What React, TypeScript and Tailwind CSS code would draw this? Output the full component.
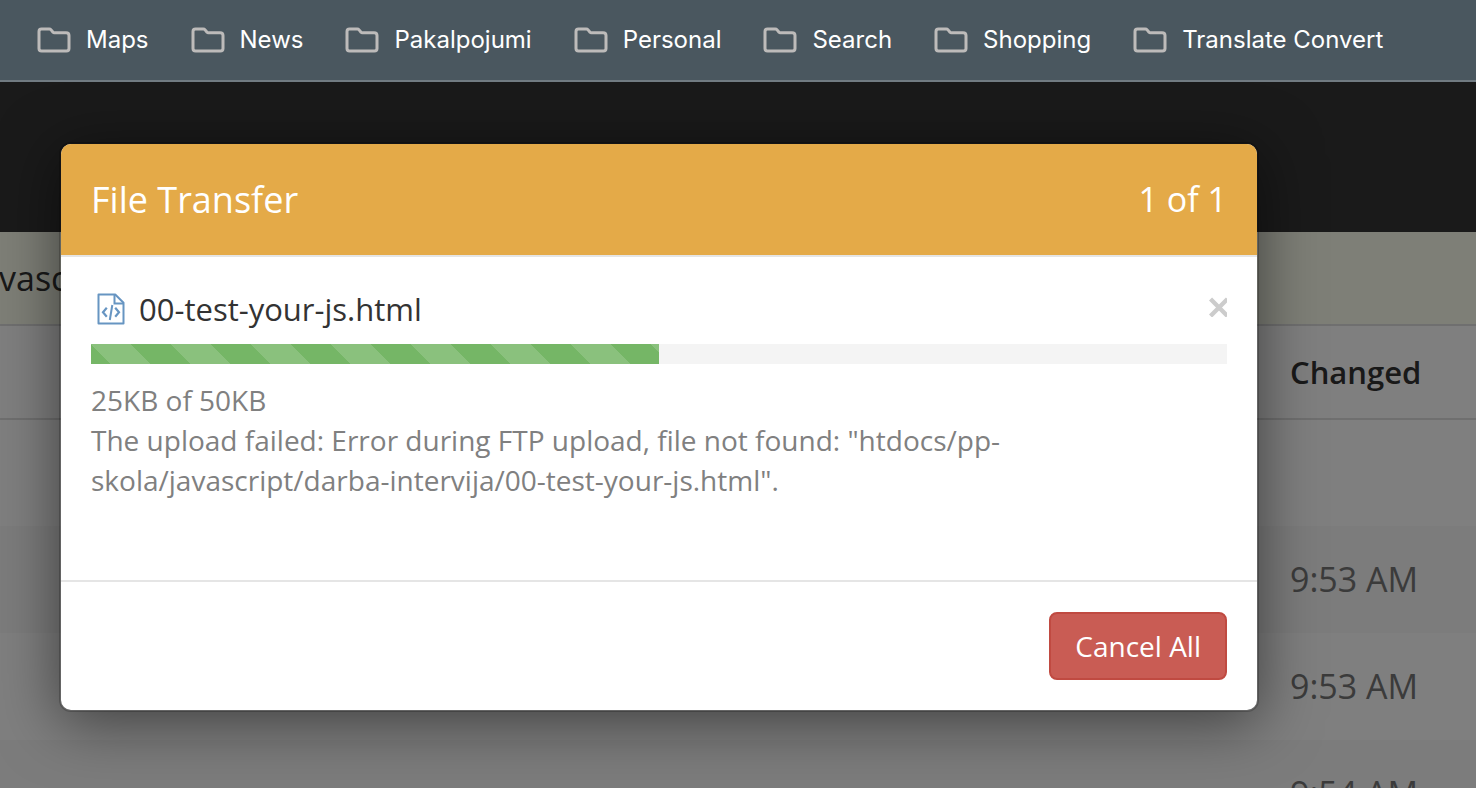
const bookmarks = ["Maps", "News", "Pakalpojumi", "Personal", "Search", "Shopping", "Translate Convert"];

const rows = ["", "9:53 AM", "9:53 AM", "9:54 AM"];

const transfer = {
  name: "00-test-your-js.html",
  done: 25,
  total: 50,
  error:
    'The upload failed: Error during FTP upload, file not found: "htdocs/pp-skola/javascript/darba-intervija/00-test-your-js.html".',
};

function FolderIcon() {
  return (
    <svg className="w-[34px] h-[26px] shrink-0" viewBox="0 0 34 26" fill="none" stroke="#bdbbba" strokeWidth="3" strokeLinejoin="round">
      <path d="M2 4.5C2 2.8 2.8 2 4.5 2H12.2C13 2 13.6 2.3 14.1 2.9L16 5.2C16.3 5.6 16.8 5.8 17.4 5.8H29C31 5.8 32 6.8 32 8.6V21.4C32 23.2 31.2 24 29.4 24H4.6C2.8 24 2 23.2 2 21.4Z" />
    </svg>
  );
}

function CodeFileIcon() {
  return (
    <svg className="w-[28px] h-[32px] shrink-0" viewBox="0 0 28 32" fill="none" stroke="#6795c2" strokeWidth="2">
      <path d="M1.5 1.5H18.2L26.5 9.8V30.5H1.5Z" strokeLinejoin="round" />
      <path d="M17.5 1.5V10.5H26.5" />
      <path d="M9.8 14.8L6 19.3L9.8 23.8M18.2 14.8L22 19.3L18.2 23.8" strokeWidth="2.2" />
      <path d="M15.3 12L12.8 27" />
    </svg>
  );
}

function BookmarksBar() {
  return (
    <nav className="flex items-center gap-[42px] h-[82px] shrink-0 px-[37px] bg-[#4a575f] border-b-2 border-[#717b82] overflow-hidden">
      {bookmarks.map((label) => (
        <a key={label} href="#" className="flex items-center gap-[15px] text-2xl text-white font-['Inter',sans-serif] whitespace-nowrap">
          <FolderIcon />
          {label}
        </a>
      ))}
    </nav>
  );
}

function FileList() {
  return (
    <div className="bg-white">
      <div className="h-[150px] bg-[#343434]" />
      <div className="flex items-center h-[94px] bg-[#fcfeee] border-b-2 border-[#dedede]">
        <a href="#" className="-ml-px text-[34px] text-[#333]">vasc</a>
      </div>
      <table className="w-full table-fixed border-collapse text-left">
        <thead>
          <tr className="h-[93px] border-b-2 border-[#dedede]">
            <th aria-label="Name" />
            <th className="w-[186px] text-[31px] font-semibold text-[#333]">Changed</th>
          </tr>
        </thead>
        <tbody>
          {rows.map((time, i) => (
            <tr key={i} className="h-[107px] odd:bg-white even:bg-[#f8f8f8] last:bg-[#f8f8f8]">
              <td />
              <td className="text-[34px] text-[#777]">{time}</td>
            </tr>
          ))}
        </tbody>
      </table>
    </div>
  );
}

function TransferDialog() {
  const percent = (transfer.done / transfer.total) * 100;

  return (
    <section
      role="dialog"
      aria-labelledby="transfer-title"
      className="w-full max-w-[1200px] bg-white bg-clip-padding border-2 border-black/20 rounded-xl shadow-[0_10px_60px_rgba(0,0,0,0.5)]"
    >
      <header className="flex items-center justify-between px-[30px] py-[30px] bg-[#e4aa48] border-b-2 border-[#e5e5e5] rounded-t-[10px] text-white text-[36px] leading-[51px]">
        <h1 id="transfer-title">File Transfer</h1>
        <span className="text-[34px]">1 of 1</span>
      </header>

      <div className="px-[30px] pt-[30px] pb-20">
        <div className="flex items-center gap-3.5 h-11 mb-[13px] pl-1.5">
          <CodeFileIcon />
          <span className="grow text-[31px] leading-10 text-[#333]">{transfer.name}</span>
          <button type="button" aria-label="Remove" className="self-start mt-2.5 cursor-pointer">
            <svg className="w-[18px] h-[20px]" viewBox="0 0 18 20" stroke="#ccc" strokeWidth="4.4">
              <path d="M1.5 2L18.5 19M18.5 2L1.5 19" />
            </svg>
          </button>
        </div>

        <div role="progressbar" aria-valuenow={percent} className="h-5 bg-[#f4f4f4]">
          <div
            className="h-full bg-[#75b666] bg-[length:80px_80px] bg-[linear-gradient(45deg,rgba(255,255,255,0.15)_25%,transparent_25%,transparent_50%,rgba(255,255,255,0.15)_50%,rgba(255,255,255,0.15)_75%,transparent_75%,transparent)]"
            style={{ width: `${percent}%` }}
          />
        </div>

        <div className="mt-4 max-w-[940px] text-[28px] leading-10 text-[#808080]">
          <p>
            {transfer.done}KB of {transfer.total}KB
          </p>
          <p>{transfer.error}</p>
        </div>
      </div>

      <footer className="flex justify-end p-[30px] border-t-2 border-[#e5e5e5]">
        <button
          type="button"
          className="h-[68px] px-6 bg-[#c95c54] border-2 border-[#c04a41] rounded-lg text-[28px] text-white cursor-pointer"
        >
          Cancel All
        </button>
      </footer>
    </section>
  );
}

export default function App() {
  return (
    <div className="flex flex-col h-screen overflow-hidden font-['Open_Sans',sans-serif]">
      <BookmarksBar />
      <main className="relative grow min-h-0 overflow-hidden">
        <FileList />
        <div className="absolute inset-0 bg-black/50 pt-[60px] px-[59px]">
          <TransferDialog />
        </div>
      </main>
    </div>
  );
}
